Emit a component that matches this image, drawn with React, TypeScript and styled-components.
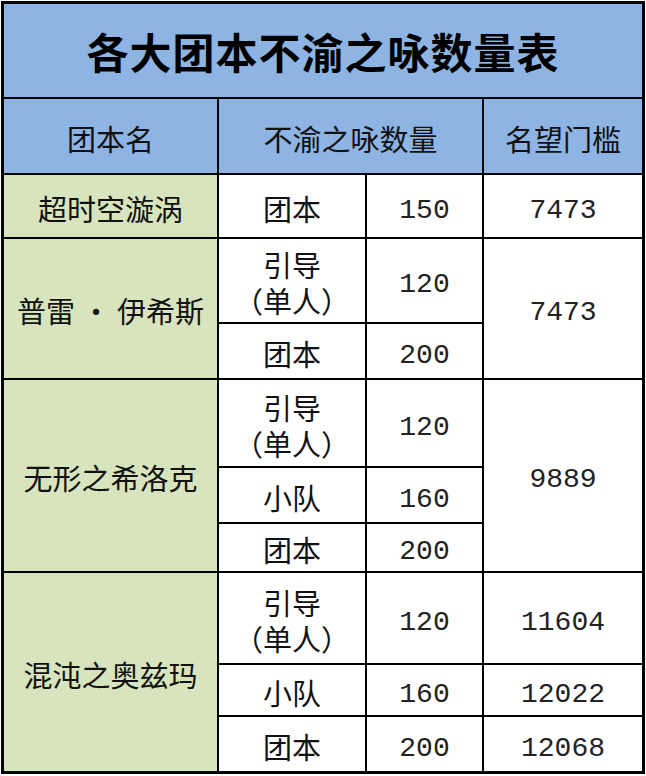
import React from "react";
import styled, { createGlobalStyle, css } from "styled-components";

const Global = createGlobalStyle`
  html, body { margin: 0; padding: 0; background: #ffffff; }
  body { font-family: "Noto Sans CJK SC", "Noto Sans", sans-serif; color: #111; }
`;

type Tone = "blue" | "green" | "white";

const tones: Record<Tone, string> = {
  blue: "#8db4e3",
  green: "#d8e4bd",
  white: "#ffffff",
};

const Page = styled.div`
  padding: 1px 0 0 1px;
`;

const Table = styled.div`
  width: 644px;
  box-sizing: border-box;
  border: 3px solid #000;
  background: #000;
  display: grid;
  grid-template-columns: 213px 146px 115px 158px;
  grid-template-rows: 93px 74px 62px 83px 54px 86px 54px 47px 90px 50px 54px;
  gap: 2px;
`;

const Cell = styled.div<{ $tone: Tone; $cols?: number; $rows?: number; $num?: boolean }>`
  background: ${(p) => tones[p.$tone]};
  display: flex;
  flex-direction: column;
  align-items: center;
  justify-content: center;
  text-align: center;
  font-size: 29px;
  line-height: 36px;
  font-weight: 400;
  color: #111;
  padding-top: 3px;
  box-sizing: border-box;
  ${(p) => p.$cols && css`grid-column: span ${p.$cols};`}
  ${(p) => p.$rows && css`grid-row: span ${p.$rows};`}
  ${(p) =>
    p.$num &&
    css`
      font-family: "Liberation Mono", "DejaVu Sans Mono", monospace;
      font-size: 28px;
      color: #222;
      padding-top: 9px;
    `}
`;

const TitleCell = styled(Cell)`
  grid-column: 1 / -1;
  font-size: 42px;
  font-weight: 700;
  letter-spacing: 1px;
  color: #000;
  padding-top: 0;
`;

const Line = styled.span`
  display: block;
`;

type Sub = { kind: string[]; count: string; fame?: string; fameRows?: number };
type Group = { name: string; subs: Sub[] };

const groups: Group[] = [
  { name: "超时空漩涡", subs: [{ kind: ["团本"], count: "150", fame: "7473", fameRows: 1 }] },
  {
    name: "普雷 · 伊希斯",
    subs: [
      { kind: ["引导", "（单人）"], count: "120", fame: "7473", fameRows: 2 },
      { kind: ["团本"], count: "200" },
    ],
  },
  {
    name: "无形之希洛克",
    subs: [
      { kind: ["引导", "（单人）"], count: "120", fame: "9889", fameRows: 3 },
      { kind: ["小队"], count: "160" },
      { kind: ["团本"], count: "200" },
    ],
  },
  {
    name: "混沌之奥兹玛",
    subs: [
      { kind: ["引导", "（单人）"], count: "120", fame: "11604", fameRows: 1 },
      { kind: ["小队"], count: "160", fame: "12022", fameRows: 1 },
      { kind: ["团本"], count: "200", fame: "12068", fameRows: 1 },
    ],
  },
];

export default function App() {
  return (
    <Page>
      <Global />
      <Table>
        <TitleCell $tone="blue">各大团本不渝之咏数量表</TitleCell>
        <Cell $tone="blue">团本名</Cell>
        <Cell $tone="blue" $cols={2}>不渝之咏数量</Cell>
        <Cell $tone="blue">名望门槛</Cell>
        {groups.map((g) => (
          <React.Fragment key={g.name}>
            <Cell $tone="green" $rows={g.subs.length}>{g.name}</Cell>
            {g.subs.map((s, i) => (
              <React.Fragment key={i}>
                <Cell $tone="white">
                  {s.kind.map((k) => (
                    <Line key={k}>{k}</Line>
                  ))}
                </Cell>
                <Cell $tone="white" $num>{s.count}</Cell>
                {s.fame && (
                  <Cell $tone="white" $num $rows={s.fameRows}>{s.fame}</Cell>
                )}
              </React.Fragment>
            ))}
          </React.Fragment>
        ))}
      </Table>
    </Page>
  );
}
